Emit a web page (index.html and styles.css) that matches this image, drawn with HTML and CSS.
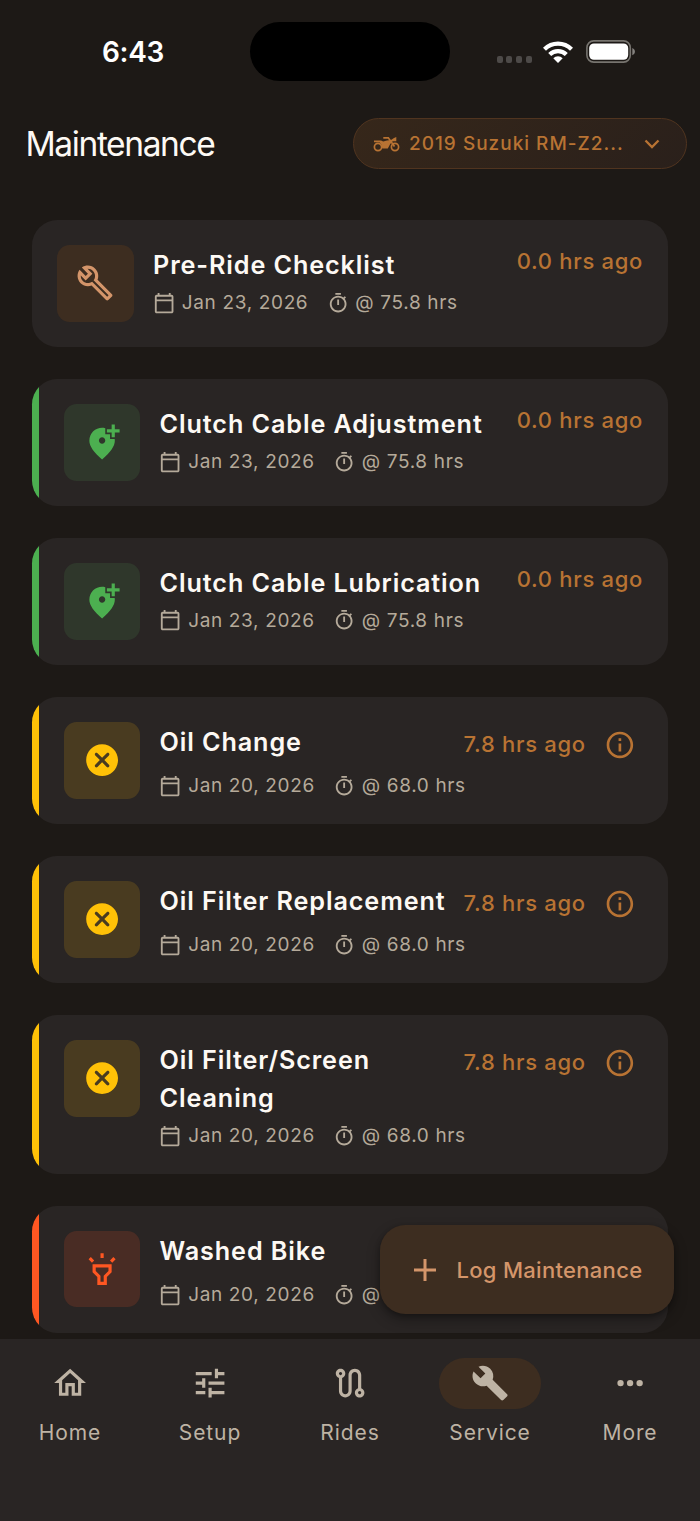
FILE: index.html
```html
<!DOCTYPE html>
<html lang="en">
<head>
<meta charset="utf-8">
<title>Maintenance</title>
<link rel="stylesheet" href="styles.css">
</head>
<body>
<svg class="sprite" width="0" height="0" aria-hidden="true">
  <symbol id="calendar" viewBox="0 0 24 24"><path d="M20 3h-1V1h-2v2H7V1H5v2H4c-1.100 0-2 .9-2 2v16c0 1.100.9 2 2 2h16c1.100 0 2-.9 2-2V5c0-1.100-.9-2-2-2zm0 18H4V10h16v11zm0-13H4V5h16v3z"/></symbol>
  <symbol id="timer" viewBox="0 0 24 24"><path d="M15 1H9v2h6V1zm-4 13h2V8h-2v6zm8.030-6.610l1.420-1.420c-.43-.51-.9-.99-1.410-1.410l-1.420 1.420C16.070 4.740 14.120 4 12 4c-4.970 0-9 4.030-9 9s4.020 9 9 9 9-4.030 9-9c0-2.120-.74-4.070-1.970-5.610zM12 20c-3.870 0-7-3.130-7-7s3.130-7 7-7 7 3.130 7 7-3.130 7-7 7z"/></symbol>
  <symbol id="wrench-outline" viewBox="0 0 24 24"><path d="M22.610 18.990l-9.080-9.080c.93-2.340.45-5.100-1.440-7C9.790.61 6.210.4 3.660 2.260L7.500 6.110 6.080 7.520 2.250 3.690C.39 6.230.6 9.820 2.900 12.110c1.860 1.860 4.570 2.350 6.890 1.480l9.110 9.110c.39.39 1.020.39 1.410 0l2.300-2.300c.4-.38.4-1.010 0-1.410zm-3 1.600l-9.460-9.460c-.61.45-1.290.72-2 .82-1.360.2-2.790-.21-3.830-1.250C3.370 9.760 2.930 8.500 3 7.260l3.090 3.090 4.240-4.240-3.090-3.090c1.240-.07 2.490.37 3.440 1.310 1.080 1.080 1.490 2.570 1.240 3.960-.12.71-.42 1.370-.88 1.960l9.450 9.450-.88.89z"/></symbol>
  <symbol id="wrench" viewBox="0 0 24 24"><path d="M22.700 19l-9.100-9.100c.9-2.300.4-5-1.500-6.900-2-2-5-2.400-7.400-1.300L9 6 6 9 1.600 4.700C.4 7.100.9 10.100 2.900 12.100c1.900 1.900 4.600 2.400 6.900 1.500l9.100 9.100c.4.4 1 .4 1.400 0l2.300-2.300c.5-.4.5-1.100.1-1.400z"/></symbol>
  <symbol id="pin-plus" viewBox="0 0 24 24"><path d="M20 1v3h3v2h-3v3h-2V6h-3V4h3V1zM14 3.250V7h3v3h2.920c.05.4.08.8.08 1.200 0 3.320-2.670 7.250-8 11.800-5.330-4.550-8-8.480-8-11.800C4 6.220 7.800 3 12 3c.68 0 1.350.08 2 .25zM12 13c1.100 0 2-.9 2-2s-.9-2-2-2-2 .9-2 2 .9 2 2 2z"/></symbol>
  <symbol id="cancel" viewBox="0 0 24 24"><path d="M12 2C6.470 2 2 6.470 2 12s4.470 10 10 10 10-4.470 10-10S17.530 2 12 2zm4.300 14.300c-.39.39-1.020.39-1.410 0L12 13.410 9.110 16.300c-.39.39-1.020.39-1.410 0-.39-.39-.39-1.020 0-1.410L10.590 12 7.700 9.110c-.39-.39-.39-1.020 0-1.410.39-.39 1.020-.39 1.410 0L12 10.590l2.890-2.890c.39-.39 1.020-.39 1.410 0 .39.39.39 1.020 0 1.410L13.410 12l2.890 2.890c.38.38.38 1.020 0 1.410z"/></symbol>
  <symbol id="torch" viewBox="0 0 24 24"><path d="M6 14l3 3v5h6v-5l3-3V9H6zM8 11h8v2.170l-3 3V20h-2v-3.830l-3-3zM11 2h2v3h-2zM3.500 5.880L4.920 4.460 7.040 6.590 5.620 8zM16.960 6.590l2.120-2.130 1.420 1.420L18.380 8z" fill-rule="evenodd"/></symbol>
  <symbol id="info" viewBox="0 0 24 24"><path d="M11 7h2v2h-2zm0 4h2v6h-2zm1-9C6.480 2 2 6.480 2 12s4.480 10 10 10 10-4.480 10-10S17.520 2 12 2zm0 18c-4.410 0-8-3.590-8-8s3.590-8 8-8 8 3.590 8 8-3.590 8-8 8z"/></symbol>
  <symbol id="moto" viewBox="0 0 27 16">
    <g fill="none" stroke="currentColor" stroke-width="1.700"><circle cx="5" cy="11" r="3.600"/><circle cx="22" cy="11" r="3.600"/><path d="M10.300 1.800h5L21.500 10.500"/></g>
    <path d="M1 4.500h7l2.200 1.100L14 4.500l4-.6L21 1.900l2.300-.9v4.200h-3.600L17.200 8l-2.400 4.500H9.300L8.300 8.300 6.500 6.200H1z"/>
  </symbol>
  <symbol id="home" viewBox="0 0 24 24"><path d="M12 5.690l5 4.500V18h-2v-6H9v6H7v-7.810l5-4.500M12 3L2 12h3v8h6v-6h2v6h6v-8h3L12 3z"/></symbol>
  <symbol id="tune" viewBox="0 0 24 24"><path d="M3 17v2h6v-2H3zM3 5v2h10V5H3zm10 16v-2h8v-2h-8v-2h-2v6h2zM7 9v2H3v2h4v2h2V9H7zm14 4v-2H11v2h10zm-6-4h2V7h4V5h-4V3h-2v6z"/></symbol>
  <symbol id="route" viewBox="0 0 24 24"><path d="M19 15.180V7c0-2.210-1.790-4-4-4s-4 1.790-4 4v10c0 1.100-.9 2-2 2s-2-.9-2-2V8.820C8.160 8.400 9 7.300 9 6c0-1.660-1.340-3-3-3S3 4.340 3 6c0 1.300.84 2.400 2 2.820V17c0 2.210 1.790 4 4 4s4-1.790 4-4V7c0-1.100.9-2 2-2s2 .9 2 2v8.180c-1.160.41-2 1.510-2 2.820 0 1.660 1.340 3 3 3s3-1.340 3-3c0-1.300-.84-2.400-2-2.820zM6 7c-.55 0-1-.45-1-1s.45-1 1-1 1 .45 1 1-.45 1-1 1zm12 12c-.55 0-1-.45-1-1s.45-1 1-1 1 .45 1 1-.45 1-1 1z"/></symbol>
  <symbol id="more" viewBox="0 0 24 24"><circle cx="6" cy="12" r="2"/><circle cx="12" cy="12" r="2"/><circle cx="18" cy="12" r="2"/></symbol>
</svg>

<div class="phone">
  <div class="status">
    <span class="time">6:43</span>
    <div class="island"></div>
    <div class="indicators">
      <div class="dots"><i></i><i></i><i></i><i></i></div>
      <svg class="wifi" viewBox="0 0 30 22" fill="none" stroke="#fff" stroke-width="4.200"><path d="M1.500 8.200a19 19 0 0 1 27 0M6.700 13.500a11.700 11.700 0 0 1 16.600 0"/><path d="M15 22l-4.700-4.800a6.700 6.700 0 0 1 9.400 0z" fill="#fff" stroke="none"/></svg>
      <svg class="battery" viewBox="0 0 50 24"><rect x=".9" y=".9" width="43.400" height="21.200" rx="6.800" fill="none" stroke="#77746f" stroke-width="1.600"/><rect x="3.200" y="3.400" width="39" height="16.400" rx="4.700" fill="#fff"/><path d="M46.300 8c3.500 1.400 3.500 5.800 0 7.200z" fill="#85827f"/></svg>
    </div>
  </div>

  <header class="header">
    <h1>Maintenance</h1>
    <div class="chip">
      <svg class="moto"><use href="#moto"/></svg>
      <span>2019 Suzuki RM-Z2...</span>
      <svg class="chevron" viewBox="0 0 16 10" fill="none" stroke="currentColor" stroke-width="2.300"><path d="M1.500 1.500L8 8l6.500-6.500"/></svg>
    </div>
  </header>

  <main class="list">
    <article class="card plain">
      <div class="tile"><svg><use href="#wrench-outline"/></svg></div>
      <div class="body">
        <div class="head"><h2>Pre-Ride Checklist</h2><span class="ago">0.0 hrs ago</span></div>
        <div class="meta"><svg><use href="#calendar"/></svg><span class="date">Jan 23, 2026</span><svg><use href="#timer"/></svg><span>@ 75.8 hrs</span></div>
      </div>
    </article>
    <article class="card green">
      <div class="tile"><svg><use href="#pin-plus"/></svg></div>
      <div class="body">
        <div class="head"><h2>Clutch Cable Adjustment</h2><span class="ago">0.0 hrs ago</span></div>
        <div class="meta"><svg><use href="#calendar"/></svg><span class="date">Jan 23, 2026</span><svg><use href="#timer"/></svg><span>@ 75.8 hrs</span></div>
      </div>
    </article>
    <article class="card green">
      <div class="tile"><svg><use href="#pin-plus"/></svg></div>
      <div class="body">
        <div class="head"><h2>Clutch Cable Lubrication</h2><span class="ago">0.0 hrs ago</span></div>
        <div class="meta"><svg><use href="#calendar"/></svg><span class="date">Jan 23, 2026</span><svg><use href="#timer"/></svg><span>@ 75.8 hrs</span></div>
      </div>
    </article>
    <article class="card amber">
      <div class="tile"><svg><use href="#cancel"/></svg></div>
      <div class="body">
        <div class="head tall"><h2>Oil Change</h2><span class="ago">7.8 hrs ago</span><svg class="info"><use href="#info"/></svg></div>
        <div class="meta"><svg><use href="#calendar"/></svg><span class="date">Jan 20, 2026</span><svg><use href="#timer"/></svg><span>@ 68.0 hrs</span></div>
      </div>
    </article>
    <article class="card amber">
      <div class="tile"><svg><use href="#cancel"/></svg></div>
      <div class="body">
        <div class="head tall"><h2>Oil Filter Replacement</h2><span class="ago">7.8 hrs ago</span><svg class="info"><use href="#info"/></svg></div>
        <div class="meta"><svg><use href="#calendar"/></svg><span class="date">Jan 20, 2026</span><svg><use href="#timer"/></svg><span>@ 68.0 hrs</span></div>
      </div>
    </article>
    <article class="card amber">
      <div class="tile"><svg><use href="#cancel"/></svg></div>
      <div class="body">
        <div class="head tall"><h2>Oil Filter/Screen<br>Cleaning</h2><span class="ago">7.8 hrs ago</span><svg class="info"><use href="#info"/></svg></div>
        <div class="meta"><svg><use href="#calendar"/></svg><span class="date">Jan 20, 2026</span><svg><use href="#timer"/></svg><span>@ 68.0 hrs</span></div>
      </div>
    </article>
    <article class="card red">
      <div class="tile"><svg><use href="#torch"/></svg></div>
      <div class="body">
        <div class="head tall"><h2>Washed Bike</h2></div>
        <div class="meta"><svg><use href="#calendar"/></svg><span class="date">Jan 20, 2026</span><svg><use href="#timer"/></svg><span>@</span></div>
      </div>
    </article>
    <div class="fab">
      <svg viewBox="0 0 22 22" fill="none" stroke="currentColor" stroke-width="3"><path d="M11 0v22M0 11h22"/></svg>
      <span>Log Maintenance</span>
    </div>
  </main>

  <nav class="nav">
    <a><span class="pill"><svg><use href="#home"/></svg></span><span>Home</span></a>
    <a><span class="pill"><svg><use href="#tune"/></svg></span><span>Setup</span></a>
    <a><span class="pill"><svg><use href="#route"/></svg></span><span>Rides</span></a>
    <a><span class="pill active"><svg><use href="#wrench"/></svg></span><span>Service</span></a>
    <a><span class="pill"><svg><use href="#more"/></svg></span><span>More</span></a>
  </nav>
</div>
</body>
</html>
```

FILE: styles.css
```css
* { box-sizing: border-box; }
body { margin: 0; background: #1d1916; font-family: Inter, "Liberation Sans", sans-serif; }
h1, h2 { margin: 0; }
svg { display: block; fill: currentColor; flex: none; }
.sprite { position: absolute; }
.phone { width: 700px; height: 1521px; overflow: hidden; display: flex; flex-direction: column; color: #fdf9f4; }

.status { height: 103px; flex: none; display: grid; grid-template-columns: 250px 200px 250px; align-items: center; }
.time { padding-left: 16px; padding-top: 1px; text-align: center; font-size: 28px; font-weight: 600; letter-spacing: -0.3px; color: #fff; }
.island { height: 59px; border-radius: 30px; background: #000; }
.indicators { display: flex; align-items: center; padding-left: 46.500px; }
.dots { display: flex; gap: 3.400px; padding-top: 16px; width: 46.500px; }
.dots i { width: 6.300px; height: 6.300px; border-radius: 2px; background: #4d4a48; }
.wifi { width: 30px; height: 22px; fill: none; }
.battery { width: 50px; height: 24px; margin-left: 12.500px; }

.header { height: 81px; flex: none; display: flex; align-items: center; justify-content: space-between; padding: 0 13px 0 25.500px; }
h1 { font-size: 33.500px; font-weight: 400; letter-spacing: -1.400px; padding-top: 1px; }
.chip { width: 334px; height: 51px; border: 1.600px solid #50341f; border-radius: 26px; background: linear-gradient(135deg, #36271a, #2a201b); color: #b87333; display: flex; align-items: center; padding-left: 19px; }
.moto { width: 27px; height: 16px; }
.chip span { width: 233px; margin-left: 9px; font-size: 19px; font-weight: 500; letter-spacing: 1px; white-space: nowrap; }
.chevron { width: 16px; height: 10px; fill: none; margin-left: 1.500px; }

.list { position: relative; height: 1155px; flex: none; overflow: hidden; padding: 36px 32px 0; display: flex; flex-direction: column; gap: 31.800px; }
.card { flex: none; display: flex; align-items: flex-start; gap: 19.400px; padding: 25.400px; border-radius: 25.400px; background: #292524; overflow: hidden; min-height: 127.200px; }
.green { --accent: #4caf50; --tint: #2f372b; }
.amber { --accent: #ffc107; --tint: #493b20; }
.red { --accent: #ff5722; --tint: #492c24; }
.plain { --accent: #d4956a; --tint: #3d2d20; }
.green, .amber, .red { background: linear-gradient(to right, var(--accent) 6.700px, #292524 6.800px); padding-left: 31.800px; }
.tile { width: 76.300px; height: 76.300px; flex: none; border-radius: 12.700px; background: var(--tint); color: var(--accent); display: grid; place-items: center; }
.tile svg { width: 38.200px; height: 38.200px; }
.body { flex: 1; min-width: 0; }
.head { display: flex; align-items: flex-start; height: 38.200px; }
.tall { height: auto; min-height: 44.500px; }
h2 { flex: 1; font-size: 25.200px; font-weight: 600; line-height: 38.200px; letter-spacing: 0.900px; padding-top: 0.800px; margin-bottom: -0.800px; white-space: nowrap; }
.ago { color: #b87333; font-size: 22px; font-weight: 500; line-height: 32px; letter-spacing: 0.700px; margin-right: -0.500px; white-space: nowrap; }
.tall .ago { line-height: 44.500px; }
.info { width: 31.800px; height: 31.800px; color: #b87333; margin: 6.400px 6.400px 0 19.100px; }
.meta { display: flex; align-items: center; height: 25.400px; margin-top: 6.400px; gap: 6.400px; color: #b5aa9a; font-size: 19px; letter-spacing: 0.650px; white-space: nowrap; }
.meta svg { width: 22.300px; height: 22.300px; }
.date { width: 138.500px; }

.fab { position: absolute; right: 26px; bottom: 25px; width: 294px; height: 89px; border-radius: 25.400px; background: #3d2d20; color: #d4956a; display: flex; align-items: center; padding-left: 33.500px; gap: 21px; font-size: 22px; font-weight: 500; letter-spacing: 0.300px; box-shadow: 0 6px 14px rgba(0, 0, 0, 0.3), 0 2px 5px rgba(0, 0, 0, 0.25); white-space: nowrap; }
.fab svg { width: 22px; height: 22px; fill: none; }

.nav { flex: 1; background: #292524; padding-top: 19px; display: grid; grid-template-columns: repeat(5, 140px); align-items: start; color: #beb3a4; }
.nav a { display: flex; flex-direction: column; align-items: center; gap: 10.600px; font-size: 21px; line-height: 26px; letter-spacing: 0.900px; }
.pill { width: 102px; height: 51px; border-radius: 26px; display: grid; place-items: center; }
.pill svg { width: 38.200px; height: 38.200px; }
.active { background: #3d2d20; }
```
